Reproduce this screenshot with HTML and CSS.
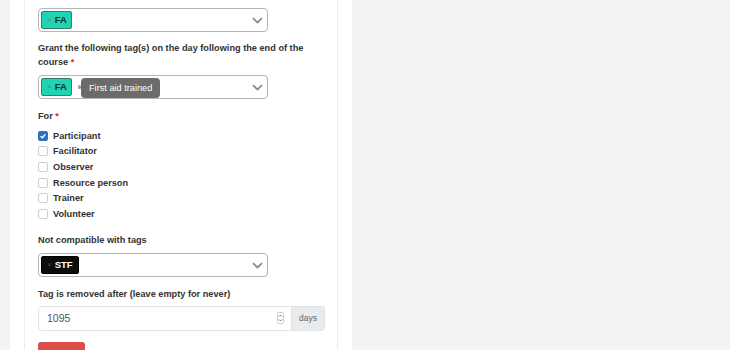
FILE: index.html
```html
<!DOCTYPE html>
<html>
<head>
<meta charset="utf-8">
<link rel="stylesheet" href="styles.css">
</head>
<body>
<div class="page">
  <div class="panel">
    <div class="card">
      <div class="label cut">Course tagging</div>
      <div class="select first">
        <span class="tag tag-fa"><span class="x">×</span>FA</span>
        <svg class="chev" width="11" height="7" viewBox="0 0 11 7"><path d="M1 1.2 L5.5 5.5 L10 1.2" fill="none" stroke="#8a8a8a" stroke-width="1.8"/></svg>
      </div>

      <div class="label l2">Grant the following tag(s) on the day following the end of the course <span class="req">*</span></div>
      <div class="select">
        <span class="tag tag-fa"><span class="x">×</span>FA</span>
        <span class="caret"></span>
        <span class="tooltip">First aid trained</span>
        <svg class="chev" width="11" height="7" viewBox="0 0 11 7"><path d="M1 1.2 L5.5 5.5 L10 1.2" fill="none" stroke="#8a8a8a" stroke-width="1.8"/></svg>
      </div>

      <div class="label l3">For <span class="req">*</span></div>
      <ul class="checks">
        <li><span class="cb on"><svg width="8" height="8" viewBox="0 0 8 8"><path d="M1.6 4.2 L3.3 5.8 L6.4 2.4" fill="none" stroke="#fff" stroke-width="1.4"/></svg></span>Participant</li>
        <li><span class="cb"></span>Facilitator</li>
        <li><span class="cb"></span>Observer</li>
        <li><span class="cb"></span>Resource person</li>
        <li><span class="cb"></span>Trainer</li>
        <li><span class="cb"></span>Volunteer</li>
      </ul>

      <div class="label l4">Not compatible with tags</div>
      <div class="select">
        <span class="tag tag-stf"><span class="x">×</span>STF</span>
        <svg class="chev" width="11" height="7" viewBox="0 0 11 7"><path d="M1 1.2 L5.5 5.5 L10 1.2" fill="none" stroke="#8a8a8a" stroke-width="1.8"/></svg>
      </div>

      <div class="label l5">Tag is removed after (leave empty for never)</div>
      <div class="igroup">
        <div class="input">
          <span class="val">1095</span>
          <span class="spin"><svg width="7" height="12" viewBox="0 0 7 12"><rect x="0.5" y="0.5" width="6" height="11" rx="2" fill="#fff" stroke="#c8c8c8"/><path d="M2 4.5 L3.5 3 L5 4.5" fill="none" stroke="#666" stroke-width="0.9"/><path d="M2 7.5 L3.5 9 L5 7.5" fill="none" stroke="#666" stroke-width="0.9"/></svg></span>
        </div>
        <div class="addon">days</div>
      </div>

      <div class="btn"></div>
    </div>
  </div>
</div>
</body>
</html>
```

FILE: styles.css
```css
html, body {
  margin: 0;
  padding: 0;
  background: #f3f3f3;
  font-family: "Liberation Sans", Arial, sans-serif;
  overflow: hidden;
}
.page {
  height: 350px;
  padding-left: 10px;
}
.panel {
  width: 314px;
  height: 350px;
  background: #fff;
  padding: 0 14px;
}
.card {
  display: flow-root;
  height: 350px;
  border-left: 1px solid #ececec;
  border-right: 1px solid #ececec;
  padding: 0 12px 0 13px;
  box-sizing: border-box;
}
.label {
  font-size: 9.2px;
  font-weight: bold;
  line-height: 14px;
  color: #333;
}
.req { color: #e02424; }
.cut {
  margin-top: -12px;
  height: 14px;
}
.select {
  position: relative;
  width: 230px;
  height: 24px;
  box-sizing: border-box;
  border: 1px solid #b5b5b5;
  border-radius: 4px;
  background: #fff;
  margin-top: 6px;
  padding: 2px 2px;
  display: flex;
  align-items: flex-start;
}
.tag {
  height: 18px;
  box-sizing: border-box;
  border-radius: 2px;
  font-size: 9.5px;
  font-weight: bold;
  line-height: 16px;
  display: inline-flex;
  align-items: center;
  padding: 0 4px 0 5px;
}
.tag .x {
  font-size: 8px;
  font-weight: normal;
  margin-right: 3px;
}
.tag-fa {
  background: #1fd3b3;
  border: 1px solid #3c7d70;
  color: #14332d;
  width: 31px;
}
.tag-fa .x { color: #5f8a82; }
.tag-stf {
  background: #0c0c0c;
  border: 1px solid #000;
  color: #fff;
  width: 38px;
}
.tag-stf .x { color: #555; }
.caret {
  width: 3px;
  height: 4px;
  background: #9a9a9a;
  border-radius: 2px;
  margin: 7px 0 0 6px;
}
.tooltip {
  position: absolute;
  left: 42px;
  top: 2px;
  height: 20px;
  padding: 0 8px;
  background: #6b6b6b;
  color: #fff;
  border-radius: 4px;
  font-size: 9.2px;
  line-height: 20px;
  white-space: nowrap;
}
.chev {
  position: absolute;
  right: 4px;
  top: 8px;
}
.l2 { margin-top: 9px; }
.l3 { margin-top: 10px; }
.l4 { margin-top: 11px; }
.l5 { margin-top: 10px; }
.checks {
  list-style: none;
  margin: 5px 0 0 0;
  padding: 0;
}
.checks li {
  height: 15.6px;
  display: flex;
  align-items: center;
  font-size: 9.2px;
  font-weight: bold;
  color: #333;
}
.cb {
  width: 10px;
  height: 10px;
  box-sizing: border-box;
  border: 1px solid #cfcfcf;
  border-radius: 2px;
  margin-right: 5px;
  display: inline-flex;
  align-items: center;
  justify-content: center;
  background: #fff;
}
.cb.on {
  background: #2f6fbf;
  border-color: #2f6fbf;
}
.igroup {
  display: flex;
  margin-top: 5px;
  height: 25px;
}
.input {
  flex: 1;
  border: 1px solid #e3e3e3;
  border-radius: 4px 0 0 4px;
  display: flex;
  align-items: center;
  padding: 0 7px 0 8px;
  justify-content: space-between;
}
.val {
  font-size: 10.5px;
  color: #555;
}
.spin { display: flex; }
.addon {
  width: 33px;
  box-sizing: border-box;
  background: #e9ecef;
  border: 1px solid #e3e3e3;
  border-left: none;
  border-radius: 0 4px 4px 0;
  font-size: 8.5px;
  color: #666;
  display: flex;
  align-items: center;
  justify-content: center;
}
.btn {
  margin-top: 11px;
  width: 47px;
  height: 20px;
  background: #dc4d4b;
  border-radius: 3px;
}
```
